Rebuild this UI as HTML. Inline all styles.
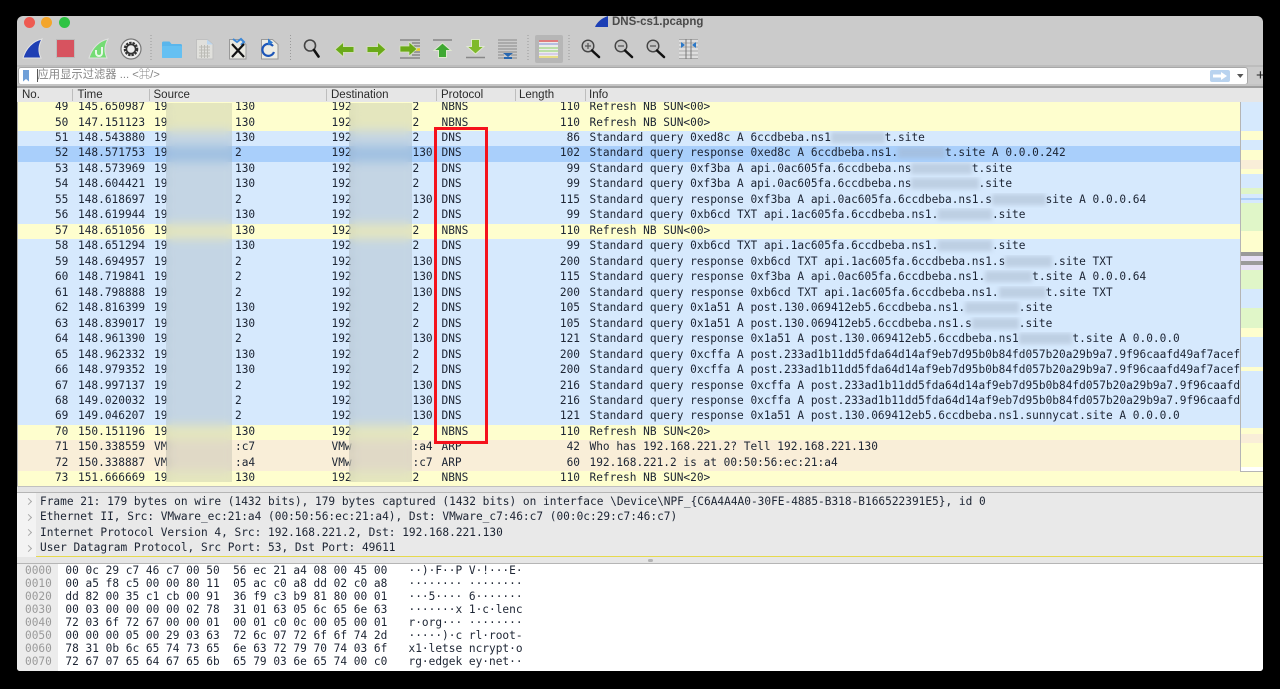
<!DOCTYPE html>
<html><head><meta charset="utf-8"><title>DNS-cs1.pcapng</title>
<style>
html,body{margin:0;padding:0;background:#000;width:1280px;height:689px;overflow:hidden}
#w{position:absolute;left:17px;top:16px;width:1246px;height:655px;border-radius:6px 6px 3px 3px;overflow:hidden;background:#cbcbcb;filter:blur(.3px)}
#a{position:absolute;left:-17px;top:-16px;width:1280px;height:689px}
.abs,#a>div,#a>svg{position:absolute}
.tl{border-radius:50%;width:11px;height:11px;top:16.5px}
.t{left:612px;top:15px;font:bold 11.5px "Liberation Sans",sans-serif;color:#4a4a4a;line-height:14px}
.h{top:89px;height:13px;font:11.5px/13px "Liberation Sans",sans-serif;color:#2b2b2b}
.hs{top:89px;width:1px;height:12px;background:#bdbdbd}
.r{left:17px;width:1223px;height:15.47px;overflow:hidden;font:11.15px/14.6px "DejaVu Sans Mono","Liberation Mono",monospace;color:#1c2433;white-space:pre}
.r span{position:absolute;top:0}
.r .n{left:0;width:51.4px;text-align:right}
.r .m{left:61px}.r .s{left:137px}.r .s2{left:218px}.r .d{left:314.5px}.r .d2{left:395.5px}
.r .p{left:424.5px}
.r .l{left:500px;width:63px;text-align:right}
.r .i{left:572.5px}
.r i{display:inline-block;height:11px;vertical-align:-2px;background:rgba(160,175,195,.45);filter:blur(2px)}
.y{background:#fefece}.b{background:#d6e9fd}.o{background:#a9cffb}.e{background:#f9eed8}
.pt{top:103px;height:379px;background:rgba(125,135,130,.2);-webkit-backdrop-filter:blur(5px);backdrop-filter:blur(5px)}
.mm{left:1241px;width:22px}
.dt{left:40px;font:11.15px/15px "DejaVu Sans Mono","Liberation Mono",monospace;color:#1c2433;white-space:pre}
.cv{left:26px;width:4px;height:4px;border-top:1px solid #aaa;border-right:1px solid #aaa;transform:rotate(45deg)}
.hx{left:65.4px;font:11.15px/13px "DejaVu Sans Mono","Liberation Mono",monospace;color:#1c2433;white-space:pre}
.of{left:25px;font:11.15px/13px "DejaVu Sans Mono","Liberation Mono",monospace;color:#9a9a9a}
.as{left:408.5px;font:11.15px/13px "DejaVu Sans Mono","Liberation Mono",monospace;color:#1c2433;white-space:pre}
</style></head><body>
<div id="w"><div id="a">

<div class="tl" style="left:24px;background:#ee5b52"></div>
<div class="tl" style="left:41.2px;background:#f3a52c"></div>
<div class="tl" style="left:58.5px;background:#2fc344"></div>

<svg style="left:0;top:0" width="1280" height="67" viewBox="0 0 1280 67">
<path d="M595 27C597 22 602 18 608 16V27Z" fill="#1c3fb5"/>
<!-- fin -->
<path d="M23 58C26 48 33 41 42 39C38 46 38 52 41 58Z" fill="#1f3fb4" stroke="#e4e4e4" stroke-width="1"/>
<!-- stop -->
<rect x="56.5" y="39.5" width="18" height="18" fill="#d7535f" stroke="#bbb"/>
<!-- restart -->
<path d="M89 58C92 48 99 41 108 39C104 46 104 52 107 58Z" fill="#74dc74" stroke="#e0e0e0"/>
<path d="M96 50v3a3 3 0 0 0 6 0v-6" fill="none" stroke="#e8f8e8" stroke-width="2"/>
<!-- gear -->
<circle cx="131" cy="49" r="10" fill="#eee" stroke="#777" stroke-width="1.2"/>
<circle cx="131" cy="49" r="6.2" fill="none" stroke="#333" stroke-width="2.2" stroke-dasharray="2.4 1"/>
<circle cx="131" cy="49" r="4.6" fill="none" stroke="#333" stroke-width="1.6"/>
<!-- separators -->
<path d="M151 35V62M290.5 35V62M528 35V62M569 35V62" stroke="#9a9a9a" stroke-dasharray="1 2" fill="none"/>
<!-- folder -->
<path d="M162 43a1.5 1.5 0 0 1 1.5-1.5h6l2 2.500h9a1.5 1.5 0 0 1 1.5 1.5V57a1 1 0 0 1-1 1h-18a1 1 0 0 1-1-1Z" fill="#5ab6ec"/>
<rect x="162" y="46" width="20" height="12" rx="1" fill="#65c0f2"/>
<!-- gray doc -->
<path d="M196.5 39.5h11l5.500 5v14.500h-16.500Z" fill="#e0e0dc" stroke="#c0c0c0"/>
<path d="M199 47h11M199 50h11M199 53h11M199 56h11M201.5 45v13M204.5 45v13M207.5 45v13" stroke="#bcbcb6" fill="none"/>
<path d="M207 39.5v5h6z" fill="#bcd6ee"/>
<!-- close doc -->
<path d="M229.5 39.5h11l5.500 5v14.500h-16.500Z" fill="#e8e8e0" stroke="#999"/>
<path d="M233 39l4 3 4-3 3 3-3 3" fill="none" stroke="#3c88d8" stroke-width="2"/>
<path d="M232 44L244 57M244 44L232 57" stroke="#111" stroke-width="2.2"/>
<!-- reload doc -->
<path d="M261.5 39.5h11l5.500 5v14.500h-16.500Z" fill="#ecece4" stroke="#999"/>
<path d="M273 46a6 6 0 1 0 1 6" fill="none" stroke="#1d56b8" stroke-width="2.2"/>
<path d="M268 38.5l5 4-5 3z" fill="#2c7ad2"/>
<!-- magnifier -->
<circle cx="310" cy="45.500" r="5.500" fill="#c9c9c9" stroke="#444" stroke-width="1.6"/>
<path d="M314 50L318.500 56.500" stroke="#111" stroke-width="2.6" stroke-linecap="round"/>
<!-- arrows -->
<path d="M335 49.500l8.500-7.500v4.500h10.500v6h-10.500v4.500Z" fill="#6aaa18" stroke="#d0ddb8"/>
<path d="M386 49.500l-8.500-7.500v4.500h-10.500v6h10.500v4.500Z" fill="#6aaa18" stroke="#d0ddb8"/>
<!-- goto -->
<path d="M400 40h20M412 43h8M412 46h8M412 52h8M412 55h8M400 58h20" stroke="#666" fill="none"/>
<path d="M416 49.500h4" stroke="#e8cc20" stroke-width="2.5"/>
<path d="M417 49l-8-7v4h-9v6h9v4Z" fill="#6aaa18" stroke="#d9e8c0" stroke-width=".7"/>
<!-- top -->
<path d="M433 40h19" stroke="#888" stroke-width="1.5"/>
<path d="M442.5 43l8.500 7.500h-4.500v7h-8v-7H434Z" fill="#3fa832" stroke="#dfe8d0"/>
<!-- bottom -->
<path d="M466 57.500h19" stroke="#888" stroke-width="1.5"/>
<path d="M475.5 54l8.500-7.500h-4.500v-7h-8v7H467Z" fill="#7fba2a" stroke="#dfe8d0"/>
<!-- last -->
<path d="M498 40h19M498 43h19M498 46h19M498 49h19M498 52h19M498 55h6M511 55h6M498 58h19" stroke="#8a8a8a" fill="none"/>
<path d="M503 53h10l-5 4z" fill="#2767b0"/>
<rect x="504" y="57" width="8" height="2" fill="#2767b0"/>
<!-- colorize -->
<rect x="535" y="35" width="28" height="28" rx="2" fill="#b6b6b6"/>
<rect x="539" y="40" width="19" height="18" fill="#ececec"/>
<path d="M539 41h19" stroke="#d83838" stroke-width="1.2"/>
<path d="M539 44h19" stroke="#7f8fd8" stroke-width="1"/>
<path d="M539 48h19" stroke="#9cd67c" stroke-width="1.2"/>
<path d="M539 51h19" stroke="#9cd67c" stroke-width="1.2"/>
<path d="M539 54h19" stroke="#c2aee6" stroke-width="1"/>
<path d="M539 57h19" stroke="#e6d64c" stroke-width="1.2"/>
<!-- zoom -->
<g fill="#c4c4c4" stroke="#444">
<circle cx="588" cy="46" r="5.800" stroke-width="1.4"/>
<circle cx="621" cy="46" r="5.800" stroke-width="1.4"/>
<circle cx="653" cy="46" r="5.800" stroke-width="1.4"/>
</g>
<path d="M592 50.500L599 57M625 50.500L632 57M657 50.500L664 57" stroke="#111" stroke-width="2.5" stroke-linecap="round"/>
<path d="M585 46h6M588 43v6M618 46h6M650 46h6" stroke="#555" stroke-width="1.2"/>
<!-- resize -->
<rect x="679" y="39" width="19" height="20" fill="#dedede"/>
<path d="M679 39.500h19M679 43h19M679 47h19M679 51h19M679 55h19M679 58.500h19" stroke="#a8a8a8"/>
<path d="M686 39v20M691 39v20" stroke="#777"/>
<path d="M681 42l4 3-4 3zM696 42l-4 3 4 3z" fill="#2a78c8"/>
</svg>
<div class="t">DNS-cs1.pcapng</div>

<!-- filter -->
<div style="left:17px;top:65px;width:1246px;height:2px;background:#bdbdbd"></div>
<div style="left:18px;top:67px;width:1228px;height:16px;background:#fff;border:1px solid #a8a8a8;border-radius:3px"></div>
<svg style="left:22px;top:70px" width="8" height="12"><path d="M1 0h6v11.500L4 9 1 11.500Z" fill="#6f9fd8"/></svg>
<div style="left:37px;top:69px;width:1px;height:13px;background:#555"></div>
<div style="left:37.500px;top:68px;font:11.300px/15px 'Liberation Sans','Noto Sans CJK SC',sans-serif;color:#858585;white-space:pre">应用显示过滤器 ... &lt;⌘/&gt;</div>
<div style="left:1210px;top:70px;width:20px;height:12px;background:#b9d3ef;border-radius:2px"></div>
<svg style="left:1212px;top:71px" width="16" height="10"><path d="M1 3.500h8V1l6 4-6 4V6.500H1Z" fill="#fff"/></svg>
<svg style="left:1237px;top:74px" width="7" height="5"><path d="M0 0h6.500L3.250 4Z" fill="#555"/></svg>
<div style="left:1256px;top:68px;font:15px/16px 'Liberation Sans',sans-serif;color:#222">+</div>
<div style="left:17px;top:84px;width:1246px;height:2px;background:#c4c4c4"></div>
<div style="left:17px;top:86px;width:1246px;height:2px;background:#9f9f9f"></div>

<!-- header -->
<div style="left:17px;top:88px;width:1246px;height:14px;background:#e6e6e6"></div>
<div class="h" style="left:22px">No.</div>
<div class="h" style="left:77.5px">Time</div>
<div class="h" style="left:153.5px">Source</div>
<div class="h" style="left:331px">Destination</div>
<div class="h" style="left:441px">Protocol</div>
<div class="h" style="left:519px">Length</div>
<div class="h" style="left:589px">Info</div>
<div class="hs" style="left:72px"></div><div class="hs" style="left:149px"></div><div class="hs" style="left:326px"></div><div class="hs" style="left:436px"></div><div class="hs" style="left:515px"></div><div class="hs" style="left:585px"></div>

<!-- rows container background -->
<div style="left:17px;top:102px;width:1246px;height:384px;background:#fefece"></div>

<div class="r y" style="top:102px;height:13.53px;line-height:9px"><span class="n">49</span><span class="m">145.650987</span><span class="s">19</span><span class="s2">130</span><span class="d">192</span><span class="d2">2</span><span class="p">NBNS</span><span class="l">110</span><span class="i">Refresh NB SUN&lt;00&gt;</span></div>
<div class="r y" style="top:115.53px"><span class="n">50</span><span class="m">147.151123</span><span class="s">19</span><span class="s2">130</span><span class="d">192</span><span class="d2">2</span><span class="p">NBNS</span><span class="l">110</span><span class="i">Refresh NB SUN&lt;00&gt;</span></div>
<div class="r b" style="top:131px"><span class="n">51</span><span class="m">148.543880</span><span class="s">19</span><span class="s2">130</span><span class="d">192</span><span class="d2">2</span><span class="p">DNS</span><span class="l">86</span><span class="i">Standard query 0xed8c A 6ccdbeba.ns1<i style="width:8ch"></i>t.site</span></div>
<div class="r o" style="top:146.47px"><span class="n">52</span><span class="m">148.571753</span><span class="s">19</span><span class="s2">2</span><span class="d">192</span><span class="d2">130</span><span class="p">DNS</span><span class="l">102</span><span class="i">Standard query response 0xed8c A 6ccdbeba.ns1.<i style="width:7ch"></i>t.site A 0.0.0.242</span></div>
<div class="r b" style="top:161.94px"><span class="n">53</span><span class="m">148.573969</span><span class="s">19</span><span class="s2">130</span><span class="d">192</span><span class="d2">2</span><span class="p">DNS</span><span class="l">99</span><span class="i">Standard query 0xf3ba A api.0ac605fa.6ccdbeba.ns<i style="width:9ch"></i>t.site</span></div>
<div class="r b" style="top:177.41px"><span class="n">54</span><span class="m">148.604421</span><span class="s">19</span><span class="s2">130</span><span class="d">192</span><span class="d2">2</span><span class="p">DNS</span><span class="l">99</span><span class="i">Standard query 0xf3ba A api.0ac605fa.6ccdbeba.ns<i style="width:10ch"></i>.site</span></div>
<div class="r b" style="top:192.88px"><span class="n">55</span><span class="m">148.618697</span><span class="s">19</span><span class="s2">2</span><span class="d">192</span><span class="d2">130</span><span class="p">DNS</span><span class="l">115</span><span class="i">Standard query response 0xf3ba A api.0ac605fa.6ccdbeba.ns1.s<i style="width:8ch"></i>site A 0.0.0.64</span></div>
<div class="r b" style="top:208.35px"><span class="n">56</span><span class="m">148.619944</span><span class="s">19</span><span class="s2">130</span><span class="d">192</span><span class="d2">2</span><span class="p">DNS</span><span class="l">99</span><span class="i">Standard query 0xb6cd TXT api.1ac605fa.6ccdbeba.ns1.<i style="width:8ch"></i>.site</span></div>
<div class="r y" style="top:223.82px"><span class="n">57</span><span class="m">148.651056</span><span class="s">19</span><span class="s2">130</span><span class="d">192</span><span class="d2">2</span><span class="p">NBNS</span><span class="l">110</span><span class="i">Refresh NB SUN&lt;00&gt;</span></div>
<div class="r b" style="top:239.29px"><span class="n">58</span><span class="m">148.651294</span><span class="s">19</span><span class="s2">130</span><span class="d">192</span><span class="d2">2</span><span class="p">DNS</span><span class="l">99</span><span class="i">Standard query 0xb6cd TXT api.1ac605fa.6ccdbeba.ns1.<i style="width:8ch"></i>.site</span></div>
<div class="r b" style="top:254.76px"><span class="n">59</span><span class="m">148.694957</span><span class="s">19</span><span class="s2">2</span><span class="d">192</span><span class="d2">130</span><span class="p">DNS</span><span class="l">200</span><span class="i">Standard query response 0xb6cd TXT api.1ac605fa.6ccdbeba.ns1.s<i style="width:7ch"></i>.site TXT</span></div>
<div class="r b" style="top:270.23px"><span class="n">60</span><span class="m">148.719841</span><span class="s">19</span><span class="s2">2</span><span class="d">192</span><span class="d2">130</span><span class="p">DNS</span><span class="l">115</span><span class="i">Standard query response 0xf3ba A api.0ac605fa.6ccdbeba.ns1.<i style="width:7ch"></i>t.site A 0.0.0.64</span></div>
<div class="r b" style="top:285.7px"><span class="n">61</span><span class="m">148.798888</span><span class="s">19</span><span class="s2">2</span><span class="d">192</span><span class="d2">130</span><span class="p">DNS</span><span class="l">200</span><span class="i">Standard query response 0xb6cd TXT api.1ac605fa.6ccdbeba.ns1.<i style="width:7ch"></i>t.site TXT</span></div>
<div class="r b" style="top:301.17px"><span class="n">62</span><span class="m">148.816399</span><span class="s">19</span><span class="s2">130</span><span class="d">192</span><span class="d2">2</span><span class="p">DNS</span><span class="l">105</span><span class="i">Standard query 0x1a51 A post.130.069412eb5.6ccdbeba.ns1.<i style="width:8ch"></i>.site</span></div>
<div class="r b" style="top:316.64px"><span class="n">63</span><span class="m">148.839017</span><span class="s">19</span><span class="s2">130</span><span class="d">192</span><span class="d2">2</span><span class="p">DNS</span><span class="l">105</span><span class="i">Standard query 0x1a51 A post.130.069412eb5.6ccdbeba.ns1.s<i style="width:7ch"></i>.site</span></div>
<div class="r b" style="top:332.11px"><span class="n">64</span><span class="m">148.961390</span><span class="s">19</span><span class="s2">2</span><span class="d">192</span><span class="d2">130</span><span class="p">DNS</span><span class="l">121</span><span class="i">Standard query response 0x1a51 A post.130.069412eb5.6ccdbeba.ns1<i style="width:8ch"></i>t.site A 0.0.0.0</span></div>
<div class="r b" style="top:347.58px"><span class="n">65</span><span class="m">148.962332</span><span class="s">19</span><span class="s2">130</span><span class="d">192</span><span class="d2">2</span><span class="p">DNS</span><span class="l">200</span><span class="i">Standard query 0xcffa A post.233ad1b11dd5fda64d14af9eb7d95b0b84fd057b20a29b9a7.9f96caafd49af7acef</span></div>
<div class="r b" style="top:363.05px"><span class="n">66</span><span class="m">148.979352</span><span class="s">19</span><span class="s2">130</span><span class="d">192</span><span class="d2">2</span><span class="p">DNS</span><span class="l">200</span><span class="i">Standard query 0xcffa A post.233ad1b11dd5fda64d14af9eb7d95b0b84fd057b20a29b9a7.9f96caafd49af7acef</span></div>
<div class="r b" style="top:378.52px"><span class="n">67</span><span class="m">148.997137</span><span class="s">19</span><span class="s2">2</span><span class="d">192</span><span class="d2">130</span><span class="p">DNS</span><span class="l">216</span><span class="i">Standard query response 0xcffa A post.233ad1b11dd5fda64d14af9eb7d95b0b84fd057b20a29b9a7.9f96caafd</span></div>
<div class="r b" style="top:393.99px"><span class="n">68</span><span class="m">149.020032</span><span class="s">19</span><span class="s2">2</span><span class="d">192</span><span class="d2">130</span><span class="p">DNS</span><span class="l">216</span><span class="i">Standard query response 0xcffa A post.233ad1b11dd5fda64d14af9eb7d95b0b84fd057b20a29b9a7.9f96caafd</span></div>
<div class="r b" style="top:409.46px"><span class="n">69</span><span class="m">149.046207</span><span class="s">19</span><span class="s2">2</span><span class="d">192</span><span class="d2">130</span><span class="p">DNS</span><span class="l">121</span><span class="i">Standard query response 0x1a51 A post.130.069412eb5.6ccdbeba.ns1.sunnycat.site A 0.0.0.0</span></div>
<div class="r y" style="top:424.93px"><span class="n">70</span><span class="m">150.151196</span><span class="s">19</span><span class="s2">130</span><span class="d">192</span><span class="d2">2</span><span class="p">NBNS</span><span class="l">110</span><span class="i">Refresh NB SUN&lt;20&gt;</span></div>
<div class="r e" style="top:440.4px"><span class="n">71</span><span class="m">150.338559</span><span class="s">VM</span><span class="s2">:c7</span><span class="d">VMw</span><span class="d2">:a4</span><span class="p">ARP</span><span class="l">42</span><span class="i">Who has 192.168.221.2? Tell 192.168.221.130</span></div>
<div class="r e" style="top:455.87px"><span class="n">72</span><span class="m">150.338887</span><span class="s">VM</span><span class="s2">:a4</span><span class="d">VMw</span><span class="d2">:c7</span><span class="p">ARP</span><span class="l">60</span><span class="i">192.168.221.2 is at 00:50:56:ec:21:a4</span></div>
<div class="r y" style="top:471.34px;height:14.66px"><span class="n">73</span><span class="m">151.666669</span><span class="s">19</span><span class="s2">130</span><span class="d">192</span><span class="d2">2</span><span class="p">NBNS</span><span class="l">110</span><span class="i">Refresh NB SUN&lt;20&gt;</span></div>

<div style="left:17px;top:102px;width:1px;height:384px;background:#b0b0b0"></div>

<!-- blur patches -->
<div class="pt" style="left:166px;width:66px"></div>
<div class="pt" style="left:349px;width:63px"></div>

<!-- red box -->
<div style="left:434px;top:127px;width:47.5px;height:310.5px;border:3px solid #f5121c"></div>

<!-- minimap -->
<div style="left:1240px;top:102px;width:1px;height:370px;background:#b5b5b5"></div>
<div style="left:1240px;top:471px;width:23px;height:1px;background:#b5b5b5"></div>
<div class="mm b" style="top:102px;height:29px"></div>
<div class="mm y" style="top:131px;height:9px"></div>
<div class="mm b" style="top:140px;height:10px"></div>
<div class="mm y" style="top:150px;height:10px"></div>
<div class="mm e" style="top:160px;height:9px"></div>
<div class="mm y" style="top:169px;height:5px"></div>
<div class="mm b" style="top:174px;height:14px"></div>
<div class="mm" style="top:188px;height:6px;background:#e0f5c8"></div>
<div class="mm b" style="top:194px;height:9px"></div>
<div class="mm" style="top:198px;height:2px;background:#a9cdf8"></div>
<div class="mm" style="top:203px;height:28px;background:#e0f6c8"></div>
<div class="mm y" style="top:231px;height:21px"></div>
<div class="mm" style="top:252px;height:4px;background:#9a9a9a"></div>
<div class="mm" style="top:256px;height:5px;background:#e6e0f5"></div>
<div class="mm" style="top:261px;height:4px;background:#9a9a9a"></div>
<div class="mm" style="top:265px;height:5px;background:#e6e0f5"></div>
<div class="mm" style="top:270px;height:19px;background:#e0f6c8"></div>
<div class="mm b" style="top:289px;height:19px"></div>
<div class="mm" style="top:308px;height:20px;background:#e0f6c8"></div>
<div class="mm y" style="top:328px;height:9px"></div>
<div class="mm b" style="top:337px;height:30px"></div>
<div class="mm y" style="top:367px;height:4px"></div>
<div class="mm b" style="top:371px;height:57px"></div>
<div class="mm y" style="top:428px;height:6px"></div>
<div class="mm e" style="top:434px;height:9px"></div>
<div class="mm y" style="top:443px;height:24px"></div>
<div class="mm" style="top:467px;height:4px;background:#fff"></div>

<!-- sash -->
<div style="left:17px;top:486px;width:1246px;height:7px;background:#e4e4e4;border-top:1px solid #c0c0c0;border-bottom:1px solid #b5b5b5;box-sizing:border-box"></div>

<!-- details -->
<div style="left:17px;top:493px;width:1246px;height:64px;background:#e9e9e9"></div>
<div style="left:17px;top:493px;width:19px;height:64px;background:#f3f3f3"></div>
<div class="cv" style="top:499px"></div><div class="cv" style="top:515px"></div><div class="cv" style="top:530px"></div><div class="cv" style="top:546px"></div>
<div class="dt" style="top:493.5px">Frame 21: 179 bytes on wire (1432 bits), 179 bytes captured (1432 bits) on interface \Device\NPF_{C6A4A4A0-30FE-4885-B318-B166522391E5}, id 0</div>
<div class="dt" style="top:509px">Ethernet II, Src: VMware_ec:21:a4 (00:50:56:ec:21:a4), Dst: VMware_c7:46:c7 (00:0c:29:c7:46:c7)</div>
<div class="dt" style="top:524.5px">Internet Protocol Version 4, Src: 192.168.221.2, Dst: 192.168.221.130</div>
<div class="dt" style="top:540px">User Datagram Protocol, Src Port: 53, Dst Port: 49611</div>
<div style="left:36px;top:556px;width:1227px;height:1px;background:#e6d94e"></div>
<div style="left:17px;top:557px;width:1246px;height:7px;background:#e6e6e6;border-bottom:1px solid #b5b5b5;box-sizing:border-box"></div>
<div style="left:648px;top:559px;width:5px;height:3px;border-radius:2px;background:#b5b5b5"></div>

<!-- hex -->
<div style="left:17px;top:564px;width:1246px;height:107px;background:#fff"></div>
<div style="left:17px;top:564px;width:41px;height:107px;background:#ececec"></div>
<div class="of" style="top:564.2px">0000</div><div class="hx" style="top:564.2px">00 0c 29 c7 46 c7 00 50  56 ec 21 a4 08 00 45 00</div><div class="as" style="top:564.2px">··)·F··P V·!···E·</div>
<div class="of" style="top:577.3px">0010</div><div class="hx" style="top:577.3px">00 a5 f8 c5 00 00 80 11  05 ac c0 a8 dd 02 c0 a8</div><div class="as" style="top:577.3px">········ ········</div>
<div class="of" style="top:590.2px">0020</div><div class="hx" style="top:590.2px">dd 82 00 35 c1 cb 00 91  36 f9 c3 b9 81 80 00 01</div><div class="as" style="top:590.2px">···5···· 6·······</div>
<div class="of" style="top:603px">0030</div><div class="hx" style="top:603px">00 03 00 00 00 00 02 78  31 01 63 05 6c 65 6e 63</div><div class="as" style="top:603px">·······x 1·c·lenc</div>
<div class="of" style="top:615.9px">0040</div><div class="hx" style="top:615.9px">72 03 6f 72 67 00 00 01  00 01 c0 0c 00 05 00 01</div><div class="as" style="top:615.9px">r·org··· ········</div>
<div class="of" style="top:628.8px">0050</div><div class="hx" style="top:628.8px">00 00 00 05 00 29 03 63  72 6c 07 72 6f 6f 74 2d</div><div class="as" style="top:628.8px">·····)·c rl·root-</div>
<div class="of" style="top:641.8px">0060</div><div class="hx" style="top:641.8px">78 31 0b 6c 65 74 73 65  6e 63 72 79 70 74 03 6f</div><div class="as" style="top:641.8px">x1·letse ncrypt·o</div>
<div class="of" style="top:654.6px">0070</div><div class="hx" style="top:654.6px">72 67 07 65 64 67 65 6b  65 79 03 6e 65 74 00 c0</div><div class="as" style="top:654.6px">rg·edgek ey·net··</div>

</div></div>
</body></html>
